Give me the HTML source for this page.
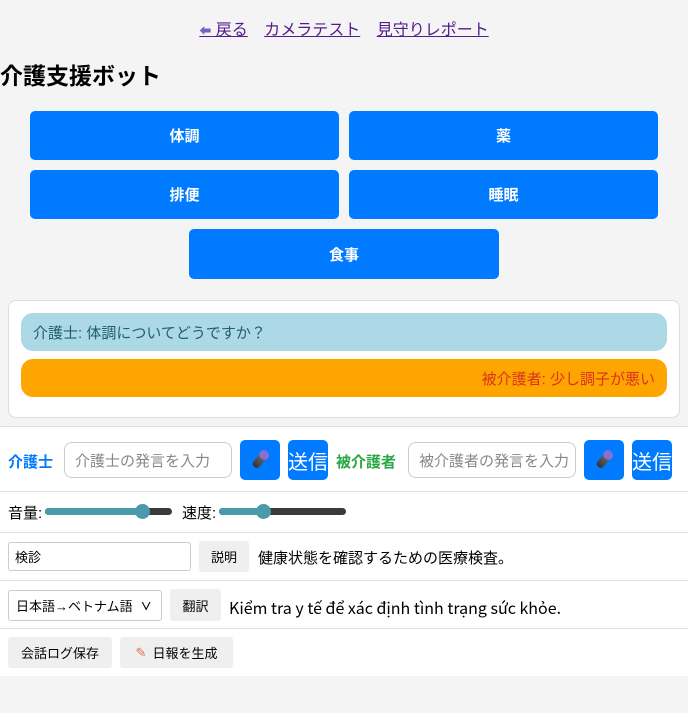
<!DOCTYPE html>
<html><head><meta charset="utf-8"><style>
*{box-sizing:border-box;margin:0;padding:0}
body{width:688px;height:713px;background:#f4f4f4;font-family:"Liberation Sans","Noto Sans CJK JP",sans-serif;position:relative;overflow:hidden}
.a{position:absolute}
.nav{top:16px;left:0;width:688px;text-align:center;font-size:16px}
.nav a{color:#551a8b;text-decoration:underline;margin:0 6px}
h1{position:absolute;left:0;top:57px;font-size:23px;font-weight:bold;color:#000}
.btn{position:absolute;background:#007bff;color:#fff;border-radius:5px;font-size:15px;font-weight:bold;display:flex;align-items:center;justify-content:center}
.chat{left:8px;top:300px;width:672px;height:118px;background:#fff;border:1px solid #ddd;border-radius:8px}
.b{position:absolute;left:12px;width:646px;height:38px;border-radius:12px;font-size:15px;display:flex;align-items:center;padding:0 12px}
.panel{left:0;top:426px;width:688px;height:250px;background:#fff;border-top:1px solid #ddd}
.hr{position:absolute;left:0;width:688px;height:1px;background:#ddd}
.inp{position:absolute;background:#fff;border:1px solid #ccc;border-radius:8px;color:#888;font-size:15px;display:flex;align-items:center;padding-left:10px;white-space:nowrap;overflow:hidden}
.gb{position:absolute;background:#efefef;border-radius:3px;font-size:13px;display:flex;align-items:center;justify-content:center;color:#000}
.t{position:absolute;font-size:15px;color:#000;white-space:nowrap}
.mic{width:8px;height:18px;background:linear-gradient(#777,#333);border-radius:4px;transform:rotate(40deg);position:relative}
.mic:before{content:"";position:absolute;left:-1px;top:-2px;width:10px;height:9px;border-radius:5px;background:#8a6fd0}
</style></head><body>
<div class="a nav"><a><span style="font-size:12px;color:#7a5fc0">⬅</span> 戻る</a> <a>カメラテスト</a> <a>見守りレポート</a></div>
<h1>介護支援ボット</h1>
<div class="btn" style="left:30px;top:111px;width:309px;height:49px">体調</div>
<div class="btn" style="left:349px;top:111px;width:309px;height:49px">薬</div>
<div class="btn" style="left:30px;top:170px;width:309px;height:49px">排便</div>
<div class="btn" style="left:349px;top:170px;width:309px;height:49px">睡眠</div>
<div class="btn" style="left:189px;top:229px;width:310px;height:50px">食事</div>
<div class="a chat">
<div class="b" style="top:12px;background:#add8e6;color:#1f5f6f">介護士: 体調についてどうですか？</div>
<div class="b" style="top:58px;background:#ffa500;color:#d9341a;justify-content:flex-end">被介護者: 少し調子が悪い</div>
</div>
<div class="a panel">
<div class="t" style="left:8px;top:24px;color:#007bff;font-weight:bold">介護士</div>
<div class="inp" style="left:64px;top:15px;width:168px;height:36px">介護士の発言を入力</div>
<div class="btn" style="left:240px;top:13px;width:40px;height:40px"><div class="mic"></div></div>
<div class="btn" style="left:288px;top:13px;width:40px;height:40px;font-size:20px;font-weight:normal">送信</div>
<div class="t" style="left:336px;top:24px;color:#28a745;font-weight:bold">被介護者</div>
<div class="inp" style="left:408px;top:15px;width:168px;height:36px">被介護者の発言を入力</div>
<div class="btn" style="left:584px;top:13px;width:40px;height:40px"><div class="mic"></div></div>
<div class="btn" style="left:632px;top:13px;width:40px;height:40px;font-size:20px;font-weight:normal">送信</div>
<div class="hr" style="top:64px"></div>
<div class="t" style="left:8px;top:75px">音量:</div>
<div class="a" style="left:45px;top:81px;width:127px;height:7px;background:#3a3a3a;border-radius:4px"><div style="width:98px;height:7px;background:#4a9aab;border-radius:4px"></div><div class="a" style="left:90px;top:-4px;width:15px;height:15px;border-radius:50%;background:#4a9aab"></div></div>
<div class="t" style="left:182px;top:75px">速度:</div>
<div class="a" style="left:219px;top:81px;width:127px;height:7px;background:#3a3a3a;border-radius:4px"><div style="width:45px;height:7px;background:#4a9aab;border-radius:4px"></div><div class="a" style="left:37px;top:-4px;width:15px;height:15px;border-radius:50%;background:#4a9aab"></div></div>
<div class="hr" style="top:105px"></div>
<div class="inp" style="left:8px;top:115px;width:183px;height:29px;border-radius:3px;color:#000;font-size:13px;padding-left:6px">検診</div>
<div class="gb" style="left:199px;top:114px;width:50px;height:31px">説明</div>
<div class="t" style="left:258px;top:120px">健康状態を確認するための医療検査。</div>
<div class="hr" style="top:153px"></div>
<div class="inp" style="left:8px;top:163px;width:154px;height:31px;border-radius:3px;color:#000;font-size:13px;padding-left:7px">日本語→ベトナム語<span style="margin-left:8px;font-size:11px;font-weight:bold">∨</span></div>
<div class="gb" style="left:170px;top:162px;width:51px;height:32px">翻訳</div>
<div class="t" style="left:229px;top:170px;font-family:'Noto Sans CJK JP','Liberation Sans',sans-serif;font-size:16px;line-height:20px">Kiểm tra y tế để xác định tình trạng sức khỏe.</div>
<div class="hr" style="top:201px"></div>
<div class="gb" style="left:8px;top:210px;width:104px;height:31px">会話ログ保存</div>
<div class="gb" style="left:120px;top:210px;width:113px;height:31px"><span style="color:#e07050;margin-right:6px">✎</span>日報を生成</div>
</div>
</body></html>
